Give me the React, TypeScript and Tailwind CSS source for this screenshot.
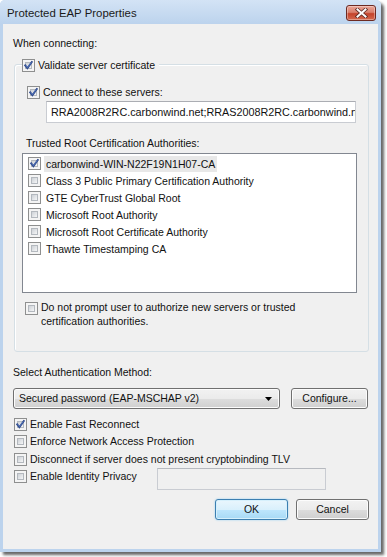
import React from "react";

const FONT = { fontFamily: '"Liberation Sans", Arial, sans-serif' };

function Box({ checked }: { checked?: boolean }) {
  return (
    <span className="relative inline-block w-[13px] h-[13px] shrink-0 border border-[#8e8f8f] bg-[#f4f4f4]">
      <span className="absolute left-[2px] top-[2px] w-[7px] h-[7px] border border-[#b3b8be] bg-gradient-to-br from-[#cdd1d6] to-[#f5f6f7]" />
      {checked && (
        <svg className="absolute left-[-1px] top-[-1px]" width="13" height="13" viewBox="0 0 13 13">
          <path d="M3.2 6.4 L5.4 9.2 L9.8 3" fill="none" stroke="#2f4a8c" strokeWidth="1.9" strokeLinecap="square" />
          <path d="M3.6 6.6 L5.4 8.6 L9.4 3.4" fill="none" stroke="#5b7fc8" strokeWidth="0.7" />
        </svg>
      )}
    </span>
  );
}

function Check({ checked, label, className = "" }: { checked?: boolean; label: string; className?: string }) {
  return (
    <div className={"flex items-center h-[18px] gap-[3px] " + className}>
      <Box checked={checked} />
      <span className="leading-[15px] whitespace-nowrap">{label}</span>
    </div>
  );
}

function Btn({ children, def, className = "" }: { children: React.ReactNode; def?: boolean; className?: string }) {
  return (
    <div
      className={
        "h-[21px] rounded-[3px] border flex items-center justify-center leading-[15px] " +
        (def
          ? "border-[#3c7fb1] bg-[linear-gradient(#eaf6fd_0%,#d9f0fc_50%,#bee6fd_51%,#a7d9f5_100%)] shadow-[inset_0_0_0_1px_#d6f0fc,0_0_2px_#8ecdf3] "
          : "border-[#707070] bg-[linear-gradient(#f2f2f2_0%,#ebebeb_50%,#dddddd_51%,#cfcfcf_100%)] shadow-[inset_0_0_0_1px_#fcfcfc] ") +
        className
      }
    >
      {children}
    </div>
  );
}

const certs = [
  { name: "carbonwind-WIN-N22F19N1H07-CA", checked: true },
  { name: "Class 3 Public Primary Certification Authority" },
  { name: "GTE CyberTrust Global Root" },
  { name: "Microsoft Root Authority" },
  { name: "Microsoft Root Certificate Authority" },
  { name: "Thawte Timestamping CA" },
];

export default function App() {
  return (
    <div className="w-[387px] h-[557px] bg-white overflow-hidden text-[#111]" style={FONT}>
      <div className="w-[381px] h-[552px] flex flex-col bg-[#bcd3ed] rounded-t-[5px] shadow-[3px_3px_3px_rgba(0,0,0,0.6)]">
        {/* title bar */}
        <div className="h-[24px] flex items-start justify-between bg-[linear-gradient(#d3e3f5,#bcd3ed)] rounded-t-[5px]">
          <span className="pl-[7px] pt-[5px] text-[11.4px] leading-[16px] text-[#1a1a1a]">Protected EAP Properties</span>
          <div className="mt-[5px] mr-[5px] w-[30px] h-[16px] rounded-[3px] border border-[#6d2a22] bg-[linear-gradient(#eba597_0%,#d9806d_45%,#c4432b_55%,#d46a4f_100%)] flex items-center justify-center shadow-[inset_0_0_0_1px_rgba(255,255,255,0.35)]">
            <svg width="13" height="10" viewBox="0 0 13 10">
              <path d="M2.5 1.5 L10.5 8.5 M10.5 1.5 L2.5 8.5" stroke="#5a2a24" strokeWidth="3.6" strokeLinecap="square" />
              <path d="M2.5 1.5 L10.5 8.5 M10.5 1.5 L2.5 8.5" stroke="#ffffff" strokeWidth="2" strokeLinecap="square" />
            </svg>
          </div>
        </div>

        {/* client area */}
        <div className="mx-[3px] mb-[3px] flex-1 bg-[#f0f0f0] text-[10.5px] pt-[12px] flex flex-col">
          <div className="pl-[10px] leading-[15px]">When connecting:</div>

          {/* group box */}
          <div className="relative ml-[11px] mt-[13px] w-[355px] h-[288px] border border-[#d5dfe5] rounded-[3px] shadow-[inset_1px_1px_0_#fff] flex flex-col">
            <div className="absolute left-[7px] top-[-9px] bg-[#f0f0f0] pr-[4px]">
              <Check checked label="Validate server certificate" className="h-[15px]" />
            </div>

            <Check checked label="Connect to these servers:" className="ml-[12px] mt-[18px]" />
            <div className="ml-[31px] mt-[0px] w-[310px] h-[22px] bg-white border border-[#c9ccd2] border-t-[#abadb3] overflow-hidden flex items-center pl-[4px] whitespace-nowrap leading-[15px] text-[10.8px]">
              RRA2008R2RC.carbonwind.net;RRAS2008R2RC.carbonwind.net
            </div>

            <div className="ml-[11px] mt-[13px] leading-[15px]">Trusted Root Certification Authorities:</div>
            <div className="ml-[7px] mt-[2px] w-[335px] h-[140px] bg-white border border-[#828790] pt-[1px] pl-[5px] flex flex-col">
              {certs.map((c, i) => (
                <div key={i} className="h-[17px] flex items-center">
                  <Box checked={c.checked} />
                  <span className={"ml-[3px] px-[2px] leading-[16px] " + (i === 0 ? "bg-[#e8e8e8]" : "")}>{c.name}</span>
                </div>
              ))}
            </div>

            <div className="ml-[10px] mt-[8px] flex items-start gap-[3px]">
              <span className="mt-[1px]">
                <Box />
              </span>
              <span className="leading-[13.5px]">
                Do not prompt user to authorize new servers or trusted
                <br />
                certification authorities.
              </span>
            </div>
          </div>

          <div className="pl-[10px] mt-[13px] leading-[15px]">Select Authentication Method:</div>
          <div className="pl-[10px] mt-[8px] flex gap-[11px]">
            <div className="w-[267px] h-[21px] rounded-[3px] border border-[#707070] bg-[linear-gradient(#f2f2f2_0%,#ebebeb_50%,#dddddd_51%,#cfcfcf_100%)] shadow-[inset_0_0_0_1px_#fcfcfc] flex items-center justify-between pl-[5px] pr-[7px] leading-[15px]">
              <span>Secured password (EAP-MSCHAP v2)</span>
              <svg width="7" height="4" viewBox="0 0 7 4">
                <path d="M0 0 H7 L3.5 4 Z" fill="#000" />
              </svg>
            </div>
            <Btn className="w-[77px]">Configure...</Btn>
          </div>

          <div className="pl-[11px] mt-[6px] flex flex-col">
            <Check checked label="Enable Fast Reconnect" />
            <Check label="Enforce Network Access Protection" className="-mt-[1px]" />
            <Check label="Disconnect if server does not present cryptobinding TLV" />
            <div className="flex items-start -mt-[1px]">
              <Check label="Enable Identity Privacy" className="w-[143px]" />
              <div className="mt-[1px] w-[169px] h-[22px] border border-[#c9ccd2] border-t-[#b6b9bf] bg-[#f0f0f0]" />
            </div>
          </div>

          <div className="mt-[9px] pr-[9px] flex justify-end gap-[8px]">
            <Btn def className="w-[73px]">OK</Btn>
            <Btn className="w-[73px]">Cancel</Btn>
          </div>
        </div>
      </div>
    </div>
  );
}
